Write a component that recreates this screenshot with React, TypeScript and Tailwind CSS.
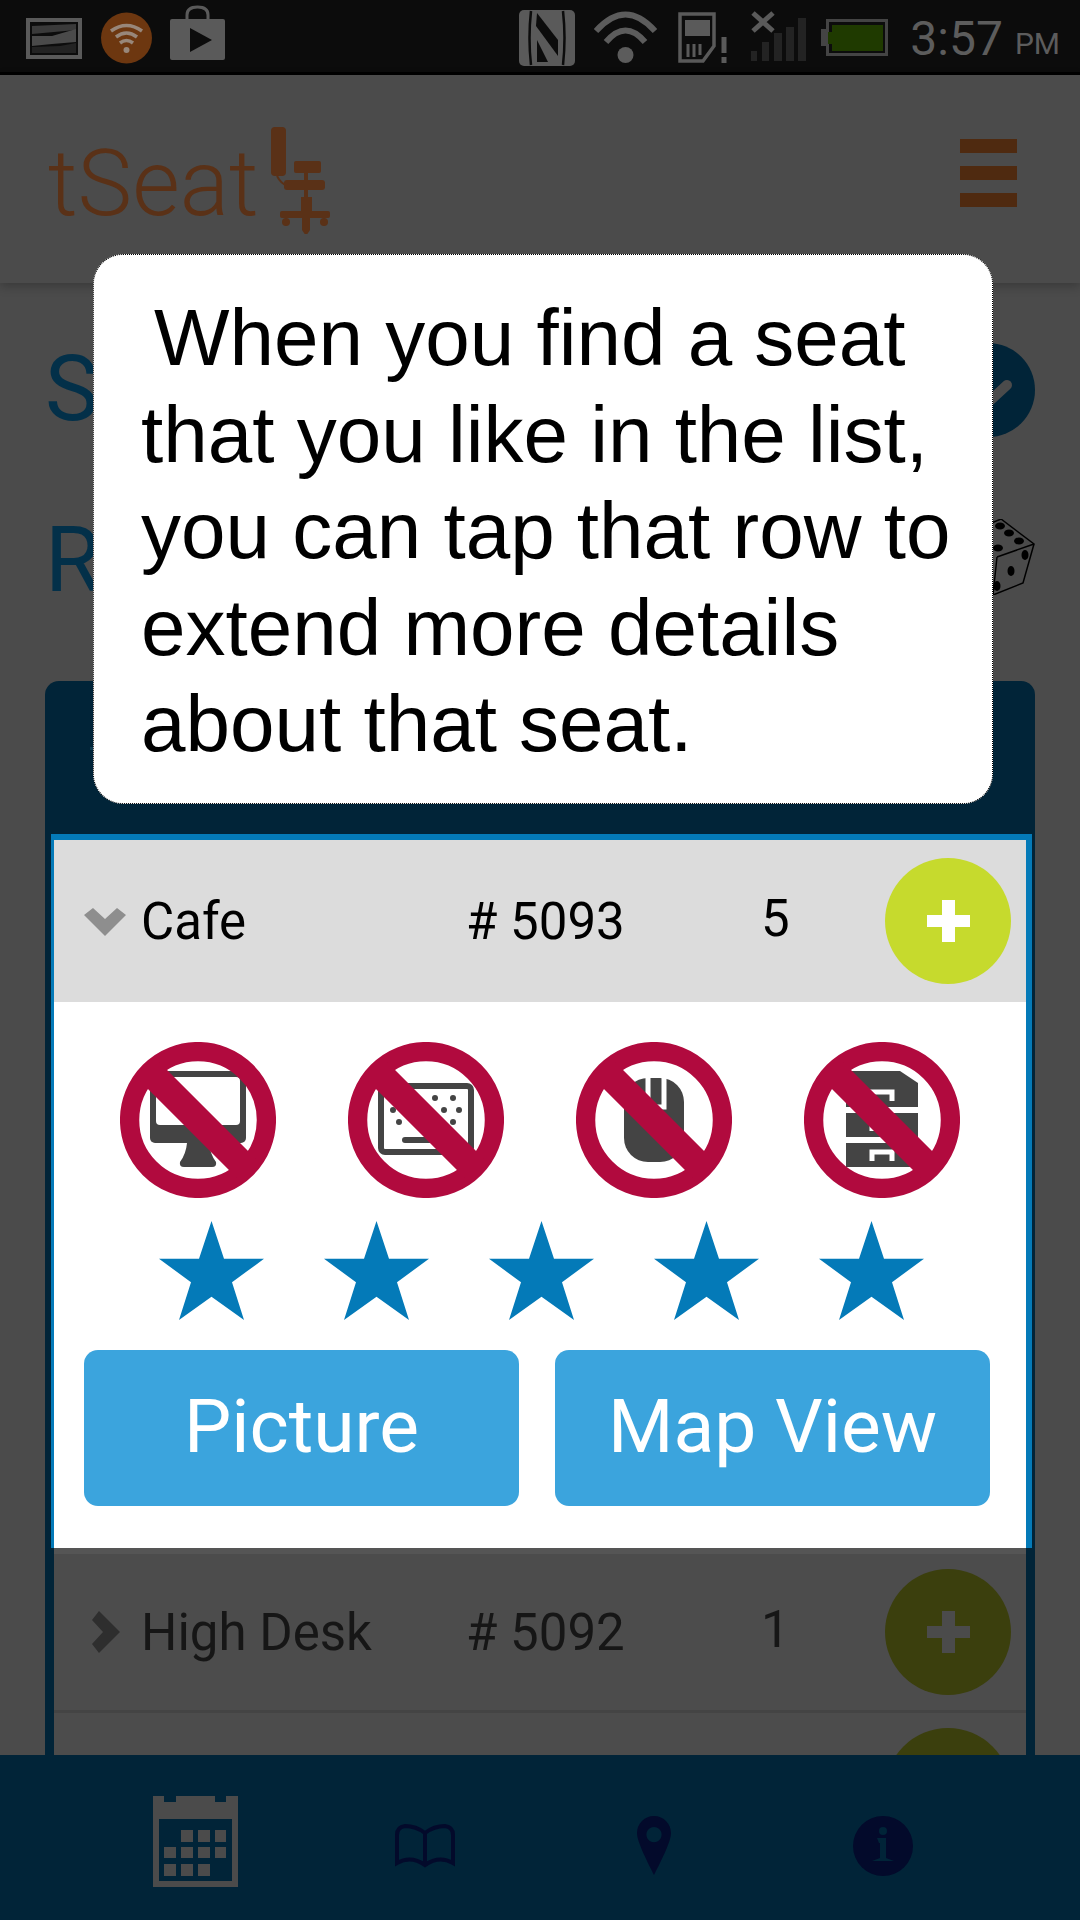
import type { ReactNode } from "react";

const roboto = "font-['Roboto',sans-serif]";

function StatusIcon({ x, w, children }: { x: number; w: number; children: ReactNode }) {
  return (
    <svg width={w} height={72} viewBox={`${x} 0 ${w} 72`} className="shrink-0">
      {children}
    </svg>
  );
}

function StatusBar() {
  return (
    <div className="flex h-[75px] shrink-0 items-start border-b-[3px] border-black bg-[#0c0c0c] pl-[26px] pr-[20px]">
      <div className="flex h-[72px] items-center gap-[19px]">
        <StatusIcon x={26} w={56}>
          <rect x="26" y="18" width="56" height="41" fill="#5a5a5a" />
          <rect x="30" y="22" width="48" height="33" fill="#0c0c0c" />
          <path d="M32 26 L76 24 V30 L32 34 Z" fill="#3a3a3a" />
          <path d="M32 36 L52 36 L76 29 V42 L52 44 L32 46 Z" fill="#4a4a4a" />
          <path d="M32 47 L60 46 L76 43 V53 H32 Z" fill="#232323" />
        </StatusIcon>
        <StatusIcon x={101} w={51}>
          <circle cx="126.5" cy="38" r="25.5" fill="#6d3710" />
          <path d="M111 31 Q126.500 20 142 31" fill="none" stroke="#98877a" strokeWidth="3.500" />
          <path d="M116 37 Q126.500 29 137 37" fill="none" stroke="#98877a" strokeWidth="3.500" />
          <path d="M120 43 Q126.500 38 133 43" fill="none" stroke="#98877a" strokeWidth="3.500" />
          <circle cx="126.500" cy="50" r="3" fill="#98877a" />
        </StatusIcon>
        <div className="-ml-px">
          <StatusIcon x={170} w={55}>
            <path d="M187 20 V15 Q187 7 197.500 7 Q208 7 208 15 V20" fill="none" stroke="#5a5a5a" strokeWidth="3" />
            <rect x="170" y="19" width="55" height="41" rx="2" fill="#5a5a5a" />
            <path d="M190 28 L212 40 L190 52 Z" fill="#0c0c0c" />
          </StatusIcon>
        </div>
      </div>
      <div className="ml-auto flex h-[72px] items-center">
        <StatusIcon x={519} w={56}>
          <rect x="519" y="10" width="56" height="56" rx="5" fill="#5a5a5a" />
          <path d="M531 11 Q528 38 531 65" fill="none" stroke="#0c0c0c" strokeWidth="2.500" />
          <path d="M563 11 Q566 38 563 65" fill="none" stroke="#0c0c0c" strokeWidth="2.500" />
          <path d="M536 26 L558 56 V40 L537 13 Z" fill="#0c0c0c" />
          <path d="M537 40 V62 L548 62 Z" fill="#0c0c0c" />
        </StatusIcon>
        <div className="ml-[19px]">
          <StatusIcon x={594} w={63}>
            <path d="M596 31 Q625.500 -2 655 31" fill="none" stroke="#5c5c5c" strokeWidth="6" />
            <path d="M606 42 Q625.500 19 645 42" fill="none" stroke="#5c5c5c" strokeWidth="6" />
            <circle cx="625.500" cy="55" r="8" fill="#5c5c5c" />
          </StatusIcon>
        </div>
        <div className="ml-[21px]">
          <StatusIcon x={678} w={49}>
            <path d="M680 14 H714 V46 L703 61 H680 Z" fill="none" stroke="#5a5a5a" strokeWidth="3.500" />
            <rect x="685" y="20" width="25" height="16" fill="#5a5a5a" />
            <path d="M688 44 V57 M694 44 V57 M700 44 V55" stroke="#5a5a5a" strokeWidth="3" />
            <path d="M724 37 V53" stroke="#5a5a5a" strokeWidth="5" />
            <rect x="721.500" y="57" width="5" height="6" fill="#5a5a5a" />
          </StatusIcon>
        </div>
        <div className="ml-[24px]">
          <StatusIcon x={751} w={55}>
            <path d="M751 51 H757 V61 H751 Z M762 42 H769 V61 H762 Z M774 33 H782 V61 H774 Z M786 27 H794 V61 H786 Z M798 18 H806 V61 H798 Z" fill="#232323" />
            <path d="M753 13 L773 31 M773 13 L753 31" stroke="#5a5a5a" strokeWidth="5" />
          </StatusIcon>
        </div>
        <div className="ml-[15px]">
          <StatusIcon x={821} w={67}>
            <rect x="826" y="19" width="62" height="37" fill="#444444" />
            <rect x="821" y="29" width="6" height="17" fill="#444444" />
            <rect x="829" y="22" width="56" height="31" fill="#0c0c0c" />
            <path d="M832 25 H883 V51 H832 V44 H828 V32 H832 Z" fill="#1f3a00" />
          </StatusIcon>
        </div>
        <span className={`${roboto} ml-[22px] mt-[6px] text-[48px] leading-none text-[#5c5c5c]`}>3:57</span>
        <span className={`${roboto} ml-[12px] mt-[16px] text-[30px] leading-none text-[#5c5c5c]`}>PM</span>
      </div>
    </div>
  );
}

function Header() {
  return (
    <div className="relative z-10 flex h-[208px] shrink-0 items-start justify-between bg-[#4b4b4b] pl-[48px] pr-[63px] shadow-[0_3px_10px_rgba(0,0,0,0.25)]">
      <div className="mt-[49px] flex items-start">
        <span className={`${roboto} mt-[14px] text-[92px] font-light leading-none text-[#5a3117]`}>tSeat</span>
        <svg width={64} height={110} viewBox="270 124 64 110" className="ml-[12px] shrink-0">
          <rect x="270" y="127" width="15" height="49" rx="4" fill="#5a3117" />
          <path d="M276 176 Q280 184 287 186" fill="none" stroke="#5a3117" strokeWidth="2" />
          <rect x="293" y="161" width="27" height="12" rx="2" fill="#5a3117" />
          <rect x="283" y="180" width="41" height="10" rx="3" fill="#5a3117" />
          <rect x="303" y="173" width="4" height="8" fill="#5a3117" />
          <rect x="300" y="197" width="11" height="15" fill="#5a3117" />
          <rect x="303" y="190" width="4" height="8" fill="#5a3117" />
          <rect x="279" y="211" width="50" height="7" rx="2" fill="#5a3117" />
          <circle cx="285" cy="222" r="4" fill="#5a3117" />
          <circle cx="323" cy="222" r="4" fill="#5a3117" />
          <path d="M301 218 H309 V230 L305 236 L301 230 Z" fill="#5a3117" />
        </svg>
      </div>
      <div className="mt-[64px] flex w-[57px] flex-col gap-[13px]">
        <div className="h-[14px] bg-[#4f2a10]" />
        <div className="h-[14px] bg-[#4f2a10]" />
        <div className="h-[14px] bg-[#4f2a10]" />
      </div>
    </div>
  );
}

function PlusButton({ dim }: { dim?: boolean }) {
  return (
    <div className={`flex h-[126px] w-[126px] shrink-0 items-center justify-center rounded-full ${dim ? "bg-[#3b3f0d]" : "bg-[#c6da2d]"}`}>
      <svg width={43} height={42} viewBox="0 0 43 42">
        <path d="M15 0 H28 V15 H43 V27 H28 V42 H15 V27 H0 V15 H15 Z" fill={dim ? "#4b4b4b" : "#ffffff"} />
      </svg>
    </div>
  );
}

function SeatRow({ dim, name, num, count }: { dim?: boolean; name: string; num: string; count: string }) {
  return (
    <div className={`flex h-[156px] shrink-0 items-center pl-[30px] pr-[15px] ${roboto} text-[51px] leading-none ${dim ? "bg-[#4c4c4c] text-[#161616]" : "h-[162px] bg-[#dcdcdc] text-black"}`}>
      <svg width={42} height={42} viewBox="0 0 42 42" className="mr-[15px] shrink-0">
        {dim ? (
          <polygon points="15,42 8,33 19,21 8,9 15,0 36,21" fill="#2e2e2e" />
        ) : (
          <polygon points="0,15 9,8 21,19 33,8 42,15 21,36" fill="#8e8e8e" />
        )}
      </svg>
      <span className="w-[325px]">{name}</span>
      <span className="w-[295px]">{num}</span>
      <span className="mt-[-6px] w-[124px]">{count}</span>
      <PlusButton dim={dim} />
    </div>
  );
}

function Ban({ children }: { children: ReactNode }) {
  return (
    <svg width={156} height={156} viewBox="0 0 156 156" className="shrink-0">
      {children}
      <circle cx="78" cy="78" r="68.400" fill="none" stroke="#b10a3e" strokeWidth="19.300" />
      <line x1="30" y1="30" x2="126" y2="126" stroke="#b10a3e" strokeWidth="27" />
    </svg>
  );
}

function Star() {
  return (
    <svg width={105} height={99} viewBox="0 0 105 102" preserveAspectRatio="none" className="shrink-0">
      <polygon points="52.500,0 65,39 105,39 73,63 85,102 52.500,78 20,102 32,63 0,39 40,39" fill="#047ab8" />
    </svg>
  );
}

function SeatDetails() {
  return (
    <div className="flex h-[546px] shrink-0 flex-col bg-white">
      <div className="flex gap-[72px] pl-[66px] pt-[40px]">
        <Ban>
          <rect x="30" y="29" width="96" height="72" rx="5" fill="#444444" />
          <rect x="36" y="35" width="84" height="48" rx="4" fill="#ffffff" />
          <path d="M67 101 H89 Q90 112 96 120 Q97 125 92 125 H64 Q59 125 60 120 Q66 112 67 101 Z" fill="#444444" />
        </Ban>
        <Ban>
          <rect x="33" y="44" width="90" height="66" rx="4" fill="none" stroke="#444444" strokeWidth="6" />
          <circle cx="87" cy="56" r="3" fill="#444444" />
          <circle cx="105" cy="56" r="3" fill="#444444" />
          <circle cx="96" cy="68" r="3" fill="#444444" />
          <circle cx="111" cy="68" r="3" fill="#444444" />
          <circle cx="45" cy="68" r="3" fill="#444444" />
          <circle cx="51" cy="80" r="3" fill="#444444" />
          <circle cx="105" cy="80" r="3" fill="#444444" />
          <line x1="57" y1="98" x2="90" y2="98" stroke="#444444" strokeWidth="6" strokeLinecap="round" />
        </Ban>
        <Ban>
          <rect x="48" y="36" width="60" height="84" rx="24" fill="#444444" />
          <path d="M72 36 V60 M88 36 V65 H78" fill="none" stroke="#ffffff" strokeWidth="5" />
        </Ban>
        <Ban>
          <path d="M42 29 H96 L114 41 V65 H42 Z" fill="#444444" />
          <rect x="42" y="71" width="72" height="24" fill="#444444" />
          <rect x="42" y="101" width="72" height="24" fill="#444444" />
          <path d="M68 59 V50 H88 V59 M68 89 V80 H88 V89 M68 119 V110 H88 V119" fill="none" stroke="#ffffff" strokeWidth="5" />
        </Ban>
      </div>
      <div className="mt-[23px] flex gap-[60px] pl-[105px]">
        <Star />
        <Star />
        <Star />
        <Star />
        <Star />
      </div>
      <div className={`${roboto} mt-[30px] flex gap-[36px] pl-[30px] text-[75px] text-white`}>
        <div className="flex h-[156px] w-[435px] items-center justify-center rounded-[14px] bg-[#3ba4dd] pb-[3px]">Picture</div>
        <div className="flex h-[156px] w-[435px] items-center justify-center rounded-[14px] bg-[#3ba4dd] pb-[3px]">Map View</div>
      </div>
    </div>
  );
}

function Footer() {
  return (
    <div className="flex h-[165px] shrink-0 items-center bg-[#012438] pl-[81px] pt-[8px]">
      <div className="flex w-[229px] justify-center">
        <svg width={85} height={91} viewBox="153 1796 85 91">
          <path d="M153 1796 H164 V1802 H176 V1796 H215 V1802 H226 V1796 H238 V1887 H153 Z" fill="#4b4b4b" />
          <rect x="159" y="1819" width="73" height="62" fill="#012438" />
          <path d="M181 1830 h12 v12 h-12 Z M198 1830 h12 v12 h-12 Z M215 1830 h11 v12 h-11 Z M164 1847 h12 v11 h-12 Z M181 1847 h12 v11 h-12 Z M198 1847 h12 v11 h-12 Z M215 1847 h11 v11 h-11 Z M164 1864 h12 v12 h-12 Z M181 1864 h12 v12 h-12 Z M198 1864 h12 v12 h-12 Z" fill="#4b4b4b" />
        </svg>
      </div>
      <div className="mt-[8px] flex w-[229px] justify-center">
        <svg width={60} height={44} viewBox="396 1823 60 44">
          <path d="M426 1832 Q417 1825 406 1825 Q398 1826 398 1834 V1862 Q412 1854 426 1864 Q440 1854 454 1862 V1834 Q454 1826 446 1825 Q435 1825 426 1832 V1864" fill="none" stroke="#030a2b" strokeWidth="4" />
        </svg>
      </div>
      <div className="mt-[8px] flex w-[229px] justify-center">
        <svg width={34} height={60} viewBox="637 1816 34 60">
          <path fillRule="evenodd" d="M654 1816 C664 1816 671 1824 671 1833 C671 1842 660 1863 654 1875 C648 1863 637 1842 637 1833 C637 1824 644 1816 654 1816 Z M654 1827 a7.600 7.600 0 1 0 0.010 0 Z" fill="#030a2b" />
        </svg>
      </div>
      <div className="mt-[8px] flex w-[229px] justify-center">
        <svg width={60} height={60} viewBox="852 1816 60 60">
          <circle cx="882" cy="1846" r="30" fill="#030a2b" />
          <circle cx="882" cy="1831" r="4" fill="#012438" />
          <path d="M876 1838 H885 V1858 L893 1861 H871 L879 1858 V1843 L878 1843 Z" fill="#012438" />
        </svg>
      </div>
    </div>
  );
}

export default function App() {
  return (
    <div className="relative flex h-[1920px] w-[1080px] flex-col overflow-hidden bg-[#4b4b4b]">
      <StatusBar />
      <Header />

      <div className="flex min-h-0 flex-1 flex-col overflow-hidden pl-[45px] pr-[45px]">
        <div className={`mt-[60px] flex h-[94px] shrink-0 items-center justify-between ${roboto} text-[90px] leading-none text-[#033049]`}>
          <span>S</span>
          <svg width={94} height={94} viewBox="0 0 94 94">
            <circle cx="47" cy="47" r="47" fill="#012438" />
            <line x1="66" y1="42" x2="40" y2="66" stroke="#4b4b4b" strokeWidth="10" strokeLinecap="round" />
          </svg>
        </div>
        <div className={`mt-[82px] flex h-[76px] shrink-0 items-center justify-between ${roboto} text-[90px] leading-none text-[#033049]`}>
          <span className="mt-[8px]">R</span>
          <svg width={94} height={76} viewBox="941 519 94 76">
            <path d="M1001 519 L1034 544 L1023 583 L993 595 L960 570 L970 532 Z" fill="none" stroke="#000000" strokeWidth="1.500" />
            <path d="M997 557 L1034 544 M997 557 L993 595" fill="none" stroke="#000000" strokeWidth="1.500" />
            <ellipse cx="1000" cy="526" rx="5" ry="3.500" fill="#000000" />
            <ellipse cx="1009" cy="533" rx="5" ry="3.500" fill="#000000" />
            <ellipse cx="1019" cy="541" rx="5" ry="3.500" fill="#000000" />
            <ellipse cx="998" cy="548" rx="5" ry="3.500" fill="#000000" />
            <ellipse cx="1025" cy="555" rx="3.500" ry="5" fill="#000000" />
            <ellipse cx="1011" cy="571" rx="3.500" ry="5" fill="#000000" />
            <ellipse cx="997" cy="586" rx="3.500" ry="5" fill="#000000" />
          </svg>
        </div>

        <div className="mt-[86px] flex min-h-0 flex-1 flex-col overflow-hidden rounded-t-[14px] bg-[#012438] pl-[6px] pr-[3px]">
          <div className="h-[153px] shrink-0 pl-[39px] pt-[66px]">
            <div className="h-[3px] w-[10px] bg-[#0e3a4f]" />
          </div>
          <div className="shrink-0 border-x-[3px] border-t-[6px] border-r-[6px] border-[#047ab8]">
            <SeatRow name="Cafe" num="# 5093" count="5" />
            <SeatDetails />
          </div>
          <div className="ml-[3px] mr-[6px] flex flex-col">
            <div className="h-[6px] shrink-0 bg-[#555555]" />
            <SeatRow dim name="High Desk" num="# 5092" count="1" />
            <div className="h-[3px] shrink-0 bg-[#444444]" />
            <SeatRow dim name="" num="" count="" />
          </div>
        </div>
      </div>

      <Footer />

      <div className="absolute left-[93px] top-[254px] z-20 h-[550px] w-[900px] rounded-[30px] border border-dotted border-black bg-white pl-[47px] pt-[35px] font-['Liberation_Sans',Arial,sans-serif] text-[80px] leading-[96.5px] text-black">
        <span className="ml-[13px]">When you find a seat</span>
        <br />
        that you like in the list,
        <br />
        you can tap that row to
        <br />
        extend more details
        <br />
        about that seat.
      </div>
    </div>
  );
}
